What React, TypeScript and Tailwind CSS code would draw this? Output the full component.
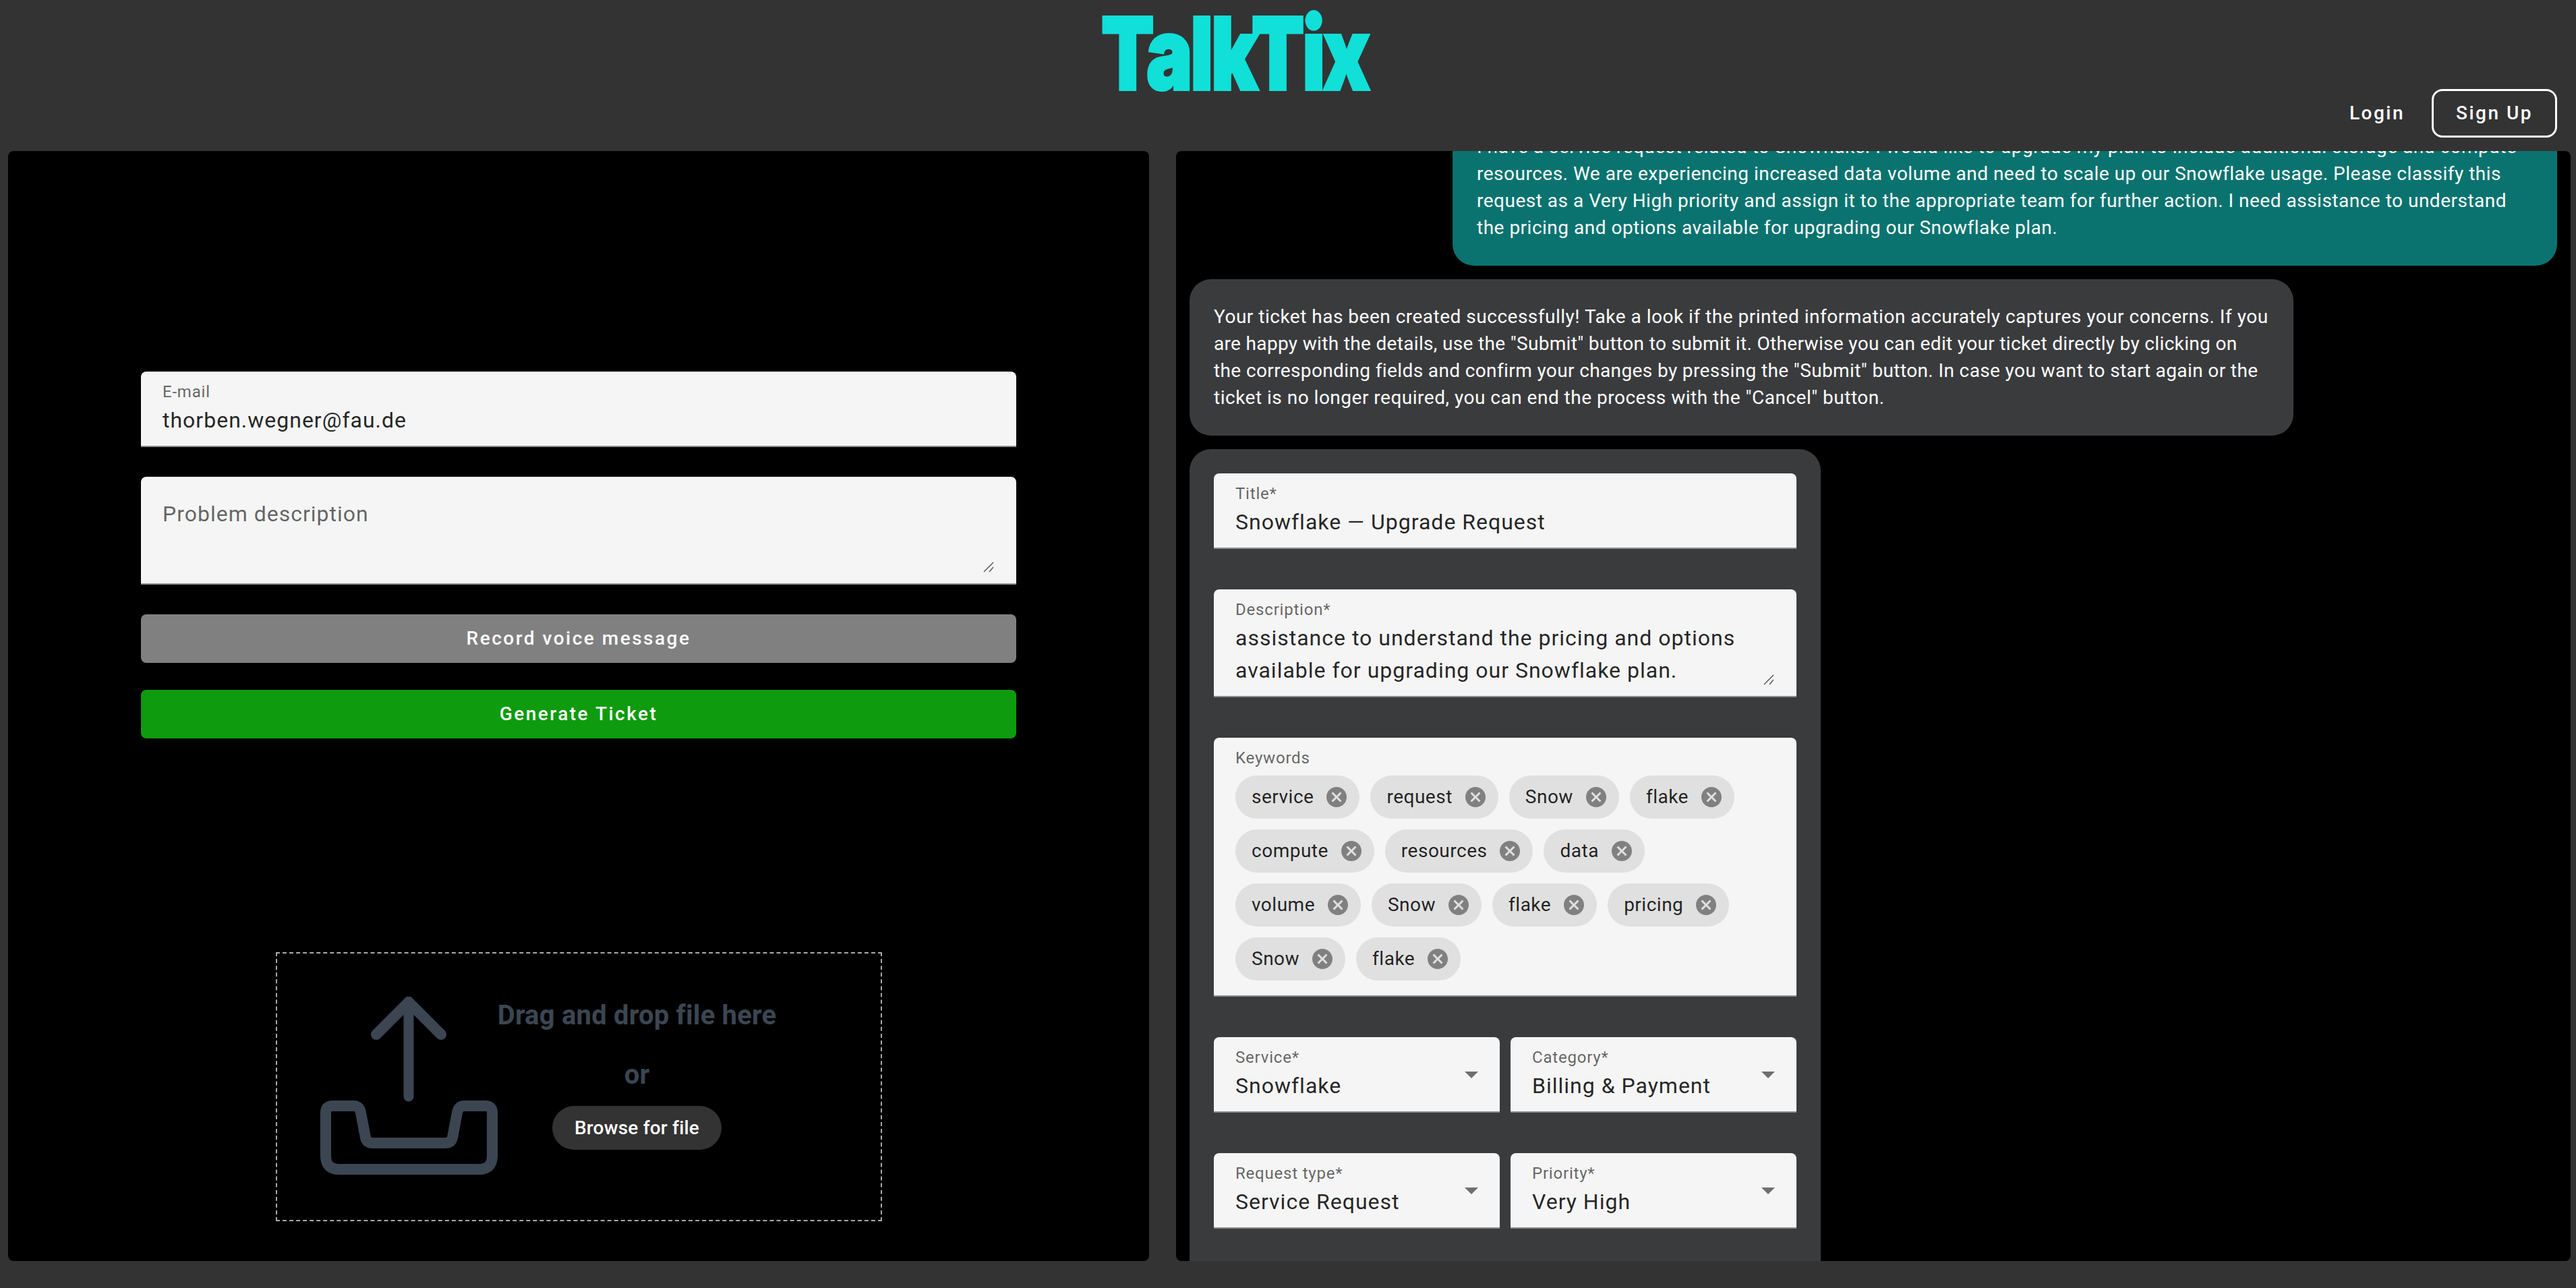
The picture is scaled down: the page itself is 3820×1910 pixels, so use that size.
const labelCls = "text-[24px] leading-[28px] tracking-[0.8px] text-black/60";
const valueCls = "mt-1 text-[32px] leading-[48px] tracking-[1px] text-black/87";

const Field = ({ label, value }: { label: string; value: string }) => {
  return (
    <div className="h-[112px] rounded-t-lg bg-[#f5f5f5] border-b-2 border-[#8c8c8c] px-8 pt-4">
      <div className={labelCls}>{label}</div>
      <div className={valueCls}>{value}</div>
    </div>
  );
};

const ResizeHandle = () => {
  return (
    <svg
      className="absolute right-[33px] bottom-[16px]"
      width="16"
      height="16"
      viewBox="0 0 16 16"
      stroke="#555"
      strokeWidth="1.4"
    >
      <path d="M1 15 L15 1" />
      <path d="M9 15 L15 8" />
    </svg>
  );
};

const SelectField = ({ label, value }: { label: string; value: string }) => {
  return (
    <div className="relative h-[112px] flex-1 rounded-t-lg bg-[#f5f5f5] border-b-2 border-[#8c8c8c] px-8 pt-4">
      <div className={labelCls}>{label}</div>
      <div className={valueCls}>{value}</div>
      <div className="absolute right-[32px] top-[51px] w-0 h-0 border-x-[10px] border-x-transparent border-t-[10px] border-t-black/55" />
    </div>
  );
};

const Chip = ({ text }: { text: string }) => {
  return (
    <div className="flex h-[64px] items-center rounded-full bg-[#e0e0e0] pl-6 pr-4 text-[28px] tracking-[0.5px] text-black/87">
      <span>{text}</span>
      <svg className="ml-4" width="36" height="36" viewBox="0 0 24 24" fill="#808080">
        <path d="M12 2C6.47 2 2 6.47 2 12s4.47 10 10 10 10-4.47 10-10S17.53 2 12 2zm5 13.59L15.59 17 12 13.41 8.41 17 7 15.59 10.59 12 7 8.41 8.41 7 12 10.59 15.59 7 17 8.41 13.41 12 17 15.59z" />
      </svg>
    </div>
  );
};

const UploadIcon = () => {
  return (
    <svg width="263" height="264" viewBox="0 0 263 264" fill="none" stroke="#3b4652" strokeWidth="16" strokeLinecap="round" strokeLinejoin="round">
      <path d="M131 8 V148" strokeWidth="15" />
      <path d="M83 56 L131 8 L179 56" strokeWidth="16" strokeLinejoin="miter" />
      <path d="M18 162 H50 Q58 162 60 172 L67 209 Q69 217 78 217 H185 Q194 217 196 209 L203 172 Q205 162 213 162 H245 Q255 162 255 172 V236 Q255 256 235 256 H28 Q8 256 8 236 V172 Q8 162 18 162 Z" />
    </svg>
  );
};

const Bubble = ({ lines, className }: { lines: [string, string][]; className: string }) => {
  return (
    <div className={className}>
      {lines.map(([line, cls], i) => (
        <div key={i} className={cls}>
          {line}
        </div>
      ))}
    </div>
  );
};

const wide = "whitespace-nowrap tracking-[0.5px]";

const userLines: [string, string][] = [
  ["I have a service request related to Snowflake. I would like to upgrade my plan to include additional storage and compute", wide],
  ["resources. We are experiencing increased data volume and need to scale up our Snowflake usage. Please classify this", wide],
  ["request as a Very High priority and assign it to the appropriate team for further action. I need assistance to understand", wide],
  ["the pricing and options available for upgrading our Snowflake plan.", wide],
];

const botLines: [string, string][] = [
  ["Your ticket has been created successfully! Take a look if the printed information accurately captures your concerns. If you", wide],
  ['are happy with the details, use the "Submit" button to submit it. Otherwise you can edit your ticket directly by clicking on', "whitespace-nowrap tracking-[0.33px]"],
  ['the corresponding fields and confirm your changes by pressing the "Submit" button. In case you want to start again or the', "whitespace-nowrap tracking-[0.38px]"],
  ['ticket is no longer required, you can end the process with the "Cancel" button.', wide],
];

const keywordRows = [
  ["service", "request", "Snow", "flake"],
  ["compute", "resources", "data"],
  ["volume", "Snow", "flake", "pricing"],
  ["Snow", "flake"],
];

export default function App() {
  return (
    <div className="h-[1910px] w-[3820px] overflow-hidden bg-[#333333] font-['Roboto',sans-serif]">
      <header className="flex h-[224px] items-start">
        <div className="ml-[1633px] -mt-[10px] w-[399px] text-[148px] leading-[180px] font-black tracking-[-4px] whitespace-nowrap font-['Inter',sans-serif] text-[#10e0d8] origin-left scale-x-[0.773] [-webkit-text-stroke:4px_#10e0d8]">
          TalkTix
        </div>
        <div className="ml-auto mr-[28px] mt-[132px] flex items-center gap-[24px] text-[28px] font-medium tracking-[2.5px] text-white">
          <div className="px-4">Login</div>
          <div className="flex h-[72px] w-[186px] items-center justify-center rounded-2xl border-[3px] border-white">
            Sign Up
          </div>
        </div>
      </header>

      <main className="flex gap-10 pl-3 pr-2">
        <section className="h-[1646px] w-[1692px] overflow-hidden rounded-lg bg-black pt-[327px]">
          <div className="mx-auto flex w-[1298px] flex-col">
            <Field label="E-mail" value="thorben.wegner@fau.de" />
            <div className="relative mt-[44px] h-[160px] rounded-t-lg bg-[#f5f5f5] border-b-2 border-[#8c8c8c] px-8 pt-[31px] text-[32px] leading-[48px] tracking-[1px] text-black/60">
              Problem description
              <ResizeHandle />
            </div>
            <button className="mt-[44px] h-[72px] rounded-lg bg-[#808080] text-[28px] font-medium tracking-[2.5px] text-white">
              Record voice message
            </button>
            <button className="mt-10 h-[72px] rounded-lg bg-[#0e9b0e] text-[28px] font-medium tracking-[2.5px] text-white">
              Generate Ticket
            </button>
          </div>

          <div className="mx-auto mt-[317px] flex h-[399px] w-[899px] border-2 border-dashed border-[#aaaaaa]">
            <div className="ml-[64px] mt-[64px]">
              <UploadIcon />
            </div>
            <div className="flex w-[414px] flex-col items-center text-[40px] font-bold tracking-[0.2px] text-[#3b4652]">
              <div className="mt-[67px] leading-[50px] whitespace-nowrap">Drag and drop file here</div>
              <div className="mt-[38px] leading-[50px]">or</div>
              <button className="mt-[21px] h-[65px] w-[251px] rounded-full bg-[#333333] text-[28px] font-medium tracking-[0.2px] text-white">
                Browse for file
              </button>
            </div>
          </div>
        </section>

        <section className="h-[1646px] w-[2068px] overflow-hidden rounded-lg bg-black px-5">
          <Bubble
            lines={userLines}
            className="-mt-[62px] ml-auto w-[1638px] rounded-[32px] bg-[#0a736f] p-9 text-[28px] leading-[40px] text-white"
          />

          <Bubble
            lines={botLines}
            className="mt-5 w-[1637px] rounded-[32px] bg-[#3a3b3d] p-9 text-[28px] leading-[40px] text-white"
          />

          <div className="mt-5 w-[936px] rounded-[32px] bg-[#3a3b3d] px-9 pt-9 pb-[120px]">
            <Field label="Title*" value="Snowflake — Upgrade Request" />

            <div className="relative mt-[60px] h-[160px] overflow-hidden rounded-t-lg bg-[#f5f5f5] border-b-2 border-[#8c8c8c] px-8 pt-4">
              <div className={labelCls}>Description*</div>
              <div className={valueCls}>
                assistance to understand the pricing and options
                <br />
                available for upgrading our Snowflake plan.
              </div>
              <ResizeHandle />
            </div>

            <div className="mt-[60px] h-[384px] rounded-t-lg bg-[#f5f5f5] border-b-2 border-[#8c8c8c] px-8 pt-4">
              <div className={labelCls}>Keywords</div>
              <div className="mt-3 flex flex-col gap-4">
                {keywordRows.map((row, i) => (
                  <div key={i} className="flex gap-4">
                    {row.map((word, j) => (
                      <Chip key={j} text={word} />
                    ))}
                  </div>
                ))}
              </div>
            </div>

            <div className="mt-[60px] flex gap-4">
              <SelectField label="Service*" value="Snowflake" />
              <SelectField label="Category*" value="Billing & Payment" />
            </div>
            <div className="mt-[60px] flex gap-4">
              <SelectField label="Request type*" value="Service Request" />
              <SelectField label="Priority*" value="Very High" />
            </div>
          </div>
        </section>
      </main>
    </div>
  );
}
